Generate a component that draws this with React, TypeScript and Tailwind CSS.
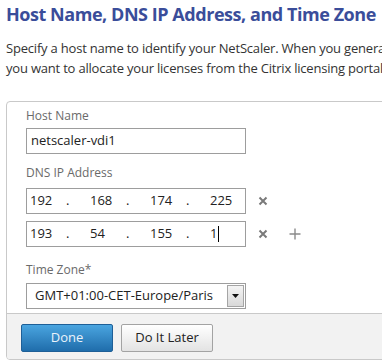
import React from 'react';

const ipRows = [
  { parts: ['192', '168', '174', '225'], caret: false, add: false },
  { parts: ['193', '54', '155', '1'], caret: true, add: true },
];

function CloseIcon() {
  return (
    <svg width="10" height="10" viewBox="0 0 10 10" className="text-[#7a7a7a]">
      <path d="M1.5 1.5 L8.5 8.5 M8.5 1.5 L1.5 8.5" stroke="currentColor" strokeWidth="2" />
    </svg>
  );
}

function PlusIcon() {
  return (
    <svg width="12" height="12" viewBox="0 0 12 12" className="text-[#8a8a8a]">
      <path d="M6 0.5 V11.5 M0.5 6 H11.5" stroke="currentColor" strokeWidth="1.4" />
    </svg>
  );
}

export default function App() {
  return (
    <div
      className="w-[382px] h-[362px] overflow-hidden bg-white"
      style={{ fontFamily: '"Open Sans", "Noto Sans", sans-serif' }}
    >
      {/* Heading */}
      <h1 className="pl-[6px] pt-[2px] text-[18px] leading-[24px] font-bold text-[#3a4d9a] whitespace-nowrap tracking-[-0.45px]">
        Host Name, DNS IP Address, and Time Zone
      </h1>
      <div className="pl-[6px] mt-[12px] text-[13px] leading-[20px] text-[#333] whitespace-nowrap tracking-[-0.2px]">
        <p>Specify a host name to identify your NetScaler. When you generate</p>
        <p>you want to allocate your licenses from the Citrix licensing portal</p>
      </div>

      {/* Card */}
      <div className="ml-[6px] mt-[23px] w-[420px] border border-[#c9c9c9] rounded-[4px] overflow-hidden">
        <div className="pl-[19px] pt-[6px] pb-[4px]">
          <label className="block text-[12px] leading-[16px] text-[#6a6a6a]">Host Name</label>
          <div className="mt-[4px] w-[220px] h-[26px] border border-[#9d9d9d] flex items-center pl-[4px] text-[13px] text-[#222]">
            netscaler-vdi1
          </div>

          <label className="block mt-[11px] text-[12px] leading-[16px] text-[#6a6a6a]">DNS IP Address</label>
          <div className="mt-[7px] flex flex-col gap-[7px]">
            {ipRows.map((row, i) => (
              <div key={i} className="flex items-center">
                <div className="w-[220px] h-[26px] border border-[#9d9d9d] flex items-center pl-[3px] text-[13px] text-[#222]">
                  {row.parts.map((p, j) => (
                    <div key={j} className="flex items-center">
                      <span className="w-[36px] flex items-center">
                        {p}
                        {row.caret && j === 3 && <span className="ml-[1px] w-px h-[16px] bg-black" />}
                      </span>
                      {j < 3 && <span className="w-[24px]">.</span>}
                    </div>
                  ))}
                </div>
                <span className="ml-[12px] flex">
                  <CloseIcon />
                </span>
                {row.add && (
                  <span className="ml-[21px] flex">
                    <PlusIcon />
                  </span>
                )}
              </div>
            ))}
          </div>

          <label className="block mt-[15px] text-[12px] leading-[16px] text-[#6a6a6a]">Time Zone*</label>
          <div className="mt-[5px] w-[220px] h-[26px] border border-[#9d9d9d] flex items-center justify-between pl-[8px] pr-[1px] text-[13px] text-[#222]">
            <span>GMT+01:00-CET-Europe/Paris</span>
            <span className="w-[17px] h-[22px] border border-[#a5a5a5] bg-gradient-to-b from-[#f4f4f4] to-[#d9d9d9] flex items-center justify-center">
              <svg width="7" height="4" viewBox="0 0 7 4">
                <path d="M0 0 H7 L3.5 4 Z" fill="#111" />
              </svg>
            </span>
          </div>
        </div>

        {/* Footer */}
        <div className="border-t border-[#c9c9c9] bg-[#f2f2f2] h-[46px] pl-[14px] pt-[10px] flex gap-[8px]">
          <button className="w-[92px] h-[28px] rounded-[2px] border border-[#1e5f97] bg-gradient-to-b from-[#4aa5e0] to-[#1f6dab] text-[13px] text-[#eaf3fb]">
            Done
          </button>
          <button className="w-[92px] h-[28px] rounded-[2px] border border-[#a3a3a3] bg-gradient-to-b from-[#ffffff] to-[#e3e3e3] text-[13px] text-[#222]">
            Do It Later
          </button>
        </div>
      </div>
    </div>
  );
}
